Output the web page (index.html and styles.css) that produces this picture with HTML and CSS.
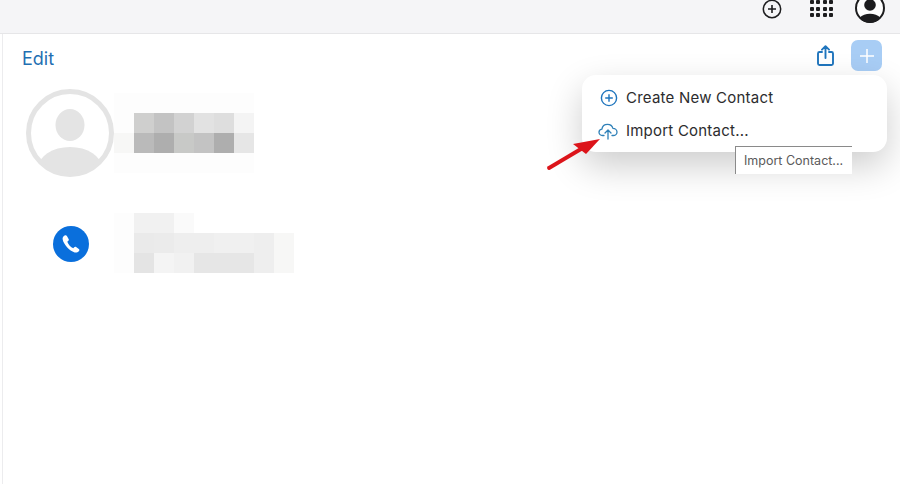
FILE: index.html
```html
<!DOCTYPE html>
<html lang="en">
<head>
<meta charset="utf-8">
<title>Contacts</title>
<link rel="stylesheet" href="styles.css">
</head>
<body>
<header class="topbar">
  <svg class="ico-add" viewBox="0 0 20 20" width="20" height="20"><circle cx="10" cy="10" r="8.7" fill="none" stroke="#1d1d1f" stroke-width="1.5"/><path d="M10 6v8M6 10h8" stroke="#1d1d1f" stroke-width="1.6" fill="none"/></svg>
  <div class="apps"><i></i><i></i><i></i><i></i><i></i><i></i><i></i><i></i><i></i><i></i><i></i><i></i></div>
  <svg class="ico-user" viewBox="0 0 30 30" width="30" height="30"><circle cx="15" cy="15" r="14" fill="#fff" stroke="#1d1d1f" stroke-width="2"/><circle cx="15" cy="12" r="5.8" fill="#1d1d1f"/><path d="M4.500 25c2.500-3 6.500-4.200 10.500-4.200s8 1.200 10.500 4.200c-2.500 3-6.500 5-10.500 5s-8-2-10.500-5z" fill="#1d1d1f"/></svg>
</header>
<main class="content">
  <div class="toolbar">
    <span class="edit">Edit</span>
    <div class="actions">
      <svg viewBox="0 0 17 21" width="17" height="21"><path d="M5 7H2.500a1.500 1.500 0 0 0-1.500 1.500v10A1.500 1.500 0 0 0 2.500 20h12a1.500 1.500 0 0 0 1.500-1.500v-10A1.500 1.500 0 0 0 14.500 7H12M8.500 13V1.500M5 4.700 8.500 1.200 12 4.700" fill="none" stroke="#1f75bd" stroke-width="1.9" stroke-linecap="round" stroke-linejoin="round"/></svg>
      <div class="addbtn"><svg viewBox="0 0 16 16" width="16" height="16"><path d="M8 1v14M1 8h14" stroke="#fff" stroke-width="1.5"/></svg></div>
    </div>
  </div>
  <section class="card-row name-row">
    <svg class="avatar" viewBox="0 0 88 88" width="88" height="88"><defs><clipPath id="a"><circle cx="44" cy="44" r="40"/></clipPath></defs><circle cx="44" cy="44" r="41.5" fill="#fff" stroke="#e4e4e4" stroke-width="5"/><ellipse cx="44" cy="36" rx="14.5" ry="16" fill="#e4e4e4"/><ellipse cx="44" cy="79" rx="32" ry="21" fill="#e4e4e4" clip-path="url(#a)"/></svg>
    <div class="mosaic m-name">
      <b class="c0"></b><b class="c0"></b><b class="c0"></b><b class="c0"></b><b class="c0"></b><b class="c0"></b><b class="c0"></b>
      <b class="c0"></b><b class="g-cf"></b><b class="g-c3"></b><b class="g-d2"></b><b class="g-e2"></b><b class="g-de"></b><b class="g-f4"></b>
      <b class="g-f7"></b><b class="g-ba"></b><b class="g-ae"></b><b class="g-c8"></b><b class="g-c3"></b><b class="g-ae"></b><b class="g-e6"></b>
      <b class="c0"></b><b class="c0"></b><b class="c0"></b><b class="c0"></b><b class="c0"></b><b class="c0"></b><b class="c0"></b>
    </div>
  </section>
  <section class="card-row phone-row">
    <div class="phone-wrap">
      <svg viewBox="0 0 36 36" width="36" height="36"><circle cx="18" cy="18" r="18" fill="#0a6fdc"/><path d="M11.600 9.600c-1.500.9-2.300 2.200-1.900 4 .9 4.800 6.800 11.600 11.900 12.800 1.800.4 3.200-.2 4.400-1.500.6-.7.5-1.400-.2-1.900l-2.700-1.900c-.7-.5-1.300-.4-1.900.2l-.9.9c-2.600-1-5-3.600-6-6.500l1-.9c.6-.6.7-1.200.3-1.900l-1.700-2.800c-.5-.8-1.300-1-2.300-.5z" fill="#fff"/></svg>
    </div>
    <div class="mosaic m-phone">
      <b class="g-fd"></b><b class="g-f1"></b><b class="g-f1"></b><b class="g-fa"></b><b class="c-none"></b><b class="c-none"></b><b class="c-none"></b><b class="c-none"></b><b class="c-none"></b>
      <b class="g-fd"></b><b class="g-ea"></b><b class="g-eb"></b><b class="g-ee"></b><b class="g-ee"></b><b class="g-f0"></b><b class="g-f0"></b><b class="g-ee"></b><b class="g-f7"></b>
      <b class="g-fd"></b><b class="g-e4"></b><b class="g-f4"></b><b class="g-f1"></b><b class="g-e6"></b><b class="g-e6"></b><b class="g-e6"></b><b class="g-ee"></b><b class="g-f7"></b>
    </div>
  </section>
  <div class="menu">
    <div class="menu-item">
      <svg viewBox="0 0 18 18" width="18" height="18"><circle cx="9" cy="9" r="7.6" fill="none" stroke="#1f75bd" stroke-width="1.4"/><path d="M9 5.200v7.600M5.200 9h7.600" stroke="#1f75bd" stroke-width="1.4"/></svg>
      <span>Create New Contact</span>
    </div>
    <div class="menu-item item-import">
      <svg viewBox="0 0 20 18" width="20" height="18"><path d="M6 13.500H4.500C2.500 13.500 1 12 1 10.300c0-1.600 1.200-3 2.900-3.200C4.300 4.300 6.600 2.300 9.500 2.300c2.600 0 4.800 1.700 5.400 4 2.300 0 4.100 1.700 4.100 3.700 0 2-1.700 3.500-3.700 3.500H14M10 17V8.500M7 11l3-3 3 3" fill="none" stroke="#2f80b8" stroke-width="1.300" stroke-linecap="round" stroke-linejoin="round"/></svg>
      <span>Import Contact...</span>
    </div>
  </div>
  <div class="tooltip">Import Contact...</div>
  <svg class="arrow" viewBox="0 0 56 36" width="56" height="36"><path d="M3 31 35 12" stroke="#dc141a" stroke-width="3.800" stroke-linecap="round"/><path d="M54 2 27 7l13 10z" fill="#dc141a"/></svg>
</main>
</body>
</html>
```
FILE: styles.css
```css
* { box-sizing: border-box; }
html, body { margin: 0; height: 100%; }
body {
  width: 900px;
  height: 484px;
  overflow: hidden;
  background: #fff;
  font-family: "Inter", "Liberation Sans", sans-serif;
  display: flex;
  flex-direction: column;
}
.topbar {
  height: 34px;
  flex: none;
  background: #f5f5f7;
  border-bottom: 1px solid #e6e6e8;
  display: flex;
  align-items: flex-start;
  justify-content: flex-end;
  overflow: hidden;
  padding-right: 15px;
}
.ico-add { margin-top: -1px; margin-right: 28px; }
.apps {
  display: grid;
  grid-template-columns: repeat(4, 4px);
  column-gap: 2.33px;
  row-gap: 2.7px;
  margin-right: 22px;
  width: 23px;
}
.apps i { display: block; width: 4px; height: 4px; background: #1d1d1f; border-radius: 1px; }
.ico-user { margin-top: -7px; }
.content {
  position: relative;
  flex: 1;
  margin-left: 2px;
  border-left: 1px solid #ececee;
  padding: 6px 18px 0 19px;
}
.toolbar {
  display: flex;
  align-items: center;
  justify-content: space-between;
  height: 31px;
}
.edit { color: #1f6fb2; font-size: 18px; margin-top: 5px; }
.actions { display: flex; align-items: center; gap: 17px; }
.addbtn {
  width: 31px;
  height: 31px;
  border-radius: 7px;
  background: #a8cdf5;
  display: flex;
  align-items: center;
  justify-content: center;
}
.card-row { display: flex; align-items: center; }
.name-row { margin-top: 18px; margin-left: 4px; height: 88px; }
.avatar { flex: none; }
.mosaic { display: grid; grid-auto-rows: 20px; grid-template-columns: repeat(var(--cols), 20px); }
.mosaic b { display: block; }
.m-name { --cols: 7; }
.phone-row { margin-top: 36px; margin-left: 4px; height: 60px; }
.phone-wrap { width: 88px; display: flex; justify-content: center; padding-left: 2px; margin-top: 2px; }
.m-phone { --cols: 9; }
.c0 { background: #fdfdfd; }
.c-none { background: transparent; }
.g-ae { background: #aeaeae; }
.g-ba { background: #bababa; }
.g-c3 { background: #c3c3c3; }
.g-c8 { background: #c8c9c7; }
.g-cf { background: #cfcfce; }
.g-d2 { background: #d2d2d2; }
.g-de { background: #dedede; }
.g-e2 { background: #e2e2e2; }
.g-e4 { background: #e4e4e4; }
.g-e6 { background: #e6e6e6; }
.g-ea { background: #eaeaea; }
.g-eb { background: #ebebeb; }
.g-ee { background: #eeeeee; }
.g-f0 { background: #f0f0f0; }
.g-f1 { background: #f1f1f1; }
.g-f4 { background: #f4f4f4; }
.g-f7 { background: #f7f7f6; }
.g-fa { background: #fafafa; }
.g-fd { background: #fdfdfd; }
.menu {
  position: absolute;
  left: 579px;
  top: 41px;
  width: 305px;
  height: 77px;
  background: #fff;
  border-radius: 14px;
  box-shadow: 0 14px 36px rgba(0, 0, 0, 0.2);
  padding: 6px 0 0 17px;
  display: flex;
  flex-direction: column;
}
.menu-item {
  display: flex;
  align-items: center;
  height: 33px;
  color: #2c2c2e;
  font-size: 15px;
  letter-spacing: 0.22px;
}
.menu-item svg { flex: none; width: 20px; margin-right: 7px; }
.item-import svg { margin-left: -1px; margin-right: 8px; }
.tooltip {
  position: absolute;
  left: 732px;
  top: 112px;
  width: 117px;
  height: 28px;
  background: #fff;
  border-left: 1px solid #8a8a8a;
  border-top: 1px solid #8a8a8a;
  color: #5a5a5a;
  font-size: 12.5px;
  padding: 6px 0 0 8px;
  white-space: nowrap;
}
.arrow { position: absolute; left: 543px; top: 103px; }
```
